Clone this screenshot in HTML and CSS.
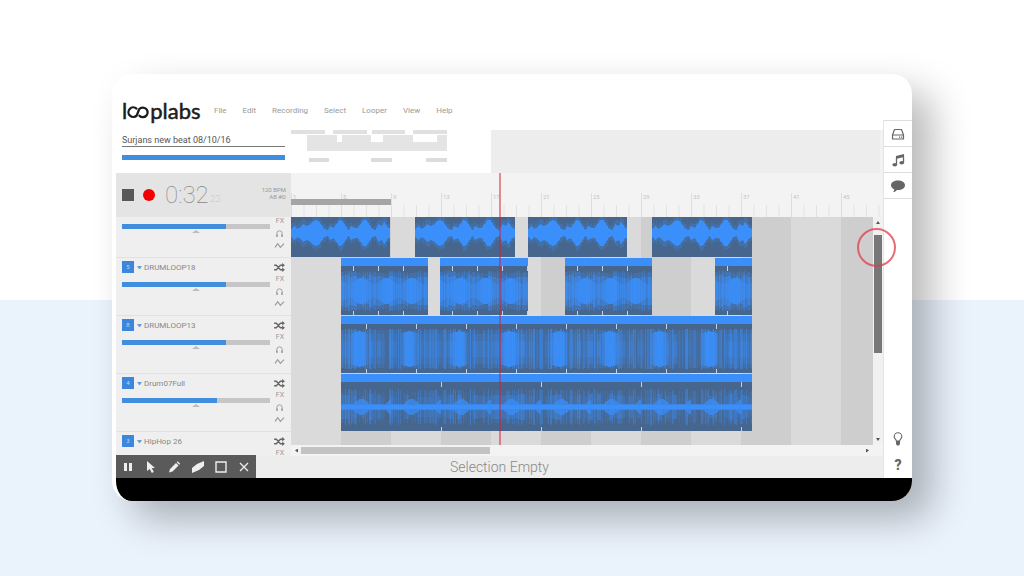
FILE: index.html
```
<!DOCTYPE html>
<html lang="en">
<head>
    <meta charset="UTF-8">
    <meta name="viewport" content="width=device-width, initial-scale=1.0">
    <title>Looplabs</title>
    <link rel="stylesheet" href="styles.css">
</head>
<body>
    <!-- shared icons -->
    <svg class="sprite" aria-hidden="true">
        <symbol id="shuffle" viewBox="0 0 12 10">
            <path d="M0 2.5h2.5L7 7.5h3M0 7.5h2.5L7 2.5h3" fill="none" stroke="currentColor" stroke-width="1.5"/>
            <path d="M9 0l3 2.5L9 5zM9 5l3 2.5L9 10z" fill="currentColor"/>
        </symbol>
        <symbol id="phones" viewBox="0 0 12 10">
            <path d="M3 8V5a3 3 0 0 1 6 0v3" fill="none" stroke="currentColor" stroke-width="1"/>
            <path d="M2.500 6h1.500v3H2.500zM8 6h1.500v3H8z" fill="currentColor"/>
        </symbol>
        <symbol id="curve" viewBox="0 0 12 10">
            <path d="M1 7l3-4 3 4 4-4" fill="none" stroke="currentColor" stroke-width="1.3"/>
        </symbol>
    </svg>

    <main class="card">
        <div class="app">
            <div class="editor">
                <header class="header">
                    <a class="logo" href="#" aria-label="looplabs">l<svg viewBox="0 0 22 14" width="22" height="14" aria-hidden="true"><path d="M9.500 3.600A4.800 4.800 0 1 0 9.800 10.400L12.200 4.200A4.800 4.800 0 1 1 12.500 10.800" fill="none" stroke="currentColor" stroke-width="2.300" stroke-linecap="round"/></svg>plabs</a>
                    <nav class="menu">
                        <button type="button">File</button>
                        <button type="button">Edit</button>
                        <button type="button">Recording</button>
                        <button type="button">Select</button>
                        <button type="button">Looper</button>
                        <button type="button">View</button>
                        <button type="button">Help</button>
                    </nav>
                </header>

                <div class="body">
                    <section class="side">
                        <div class="project">
                            <input class="project-name" type="text" aria-label="Project name" value="Surjans new beat 08/10/16">
                            <div class="project-bar"></div>
                        </div>
                        <div class="transport">
                            <button class="stop" type="button" aria-label="Stop"></button>
                            <button class="record" type="button" aria-label="Record"></button>
                            <span class="time">0:32</span><span class="millis">.23</span>
                            <span class="tempo">120 BPM<br>AB #D</span>
                        </div>
                        <div class="tracks" id="tracks"></div>
                    </section>

                    <section class="arrange">
                        <div class="overview">
                            <svg width="200" height="43" viewBox="0 0 200 43" aria-hidden="true">
                                <path d="M0 0h200v43H0z" fill="#fff"/>
                                <path d="M0 0h34v4H0zM42 0h34v4H42zM81 0h33v4H81zM122 0h34v4h-34z" fill="#e0e0e0"/>
                                <path d="M16 5h30v7H16zM51 5h29v7H51zM92 5h30v7H92zM146 5h10v7h-10z" fill="#e4e4e4"/>
                                <path d="M16 12h140v9H16z" fill="#e4e4e4"/>
                                <path d="M18 28h20v4H18zM80 28h21v4H80zM135 28h21v4h-21z" fill="#dcdcdc"/>
                            </svg>
                        </div>
                        <div class="timeline">
                            <div class="ruler" id="ruler"><div class="loop-range"></div></div>
                            <div class="stage">
                                <div class="lanes" id="lanes"></div>
                                <div class="vscroll">
                                    <span class="arrow up"></span>
                                    <div class="vthumb"></div>
                                    <span class="arrow down"></span>
                                    <div class="pointer-ring"></div>
                                </div>
                            </div>
                            <div class="hscroll">
                                <span class="arrow left"></span>
                                <div class="hthumb"></div>
                                <span class="arrow right"></span>
                            </div>
                            <div class="playhead"></div>
                        </div>
                    </section>
                </div>

                <footer class="status">
                    <div class="tools">
                        <button type="button" aria-label="Pause"><svg viewBox="0 0 14 14"><path d="M3 3h3v8H3zM8 3h3v8H8z" fill="currentColor"/></svg></button>
                        <button type="button" aria-label="Pointer"><svg viewBox="0 0 14 14"><path d="M3 1l8 7H7.800l2 4-2 1-2-4L3 11z" fill="currentColor"/></svg></button>
                        <button type="button" aria-label="Pencil"><svg viewBox="0 0 14 14"><path d="M2 12.500l1-3.500 6-6 2.500 2.500-6 6zM9.700 2.300l1-1 2.500 2.500-1 1z" fill="currentColor"/></svg></button>
                        <button type="button" aria-label="Eraser"><svg viewBox="0 0 14 14"><path d="M1 8l5-4 7-3v5l-5 4-7 3z" fill="currentColor"/></svg></button>
                        <button type="button" aria-label="Selection"><svg viewBox="0 0 14 14"><path d="M2 2h10v10H2z" fill="none" stroke="currentColor" stroke-width="1.400"/></svg></button>
                        <button type="button" aria-label="Delete"><svg viewBox="0 0 14 14"><path d="M3 3l8 8M11 3l-8 8" fill="none" stroke="currentColor" stroke-width="1.300"/></svg></button>
                    </div>
                    <span class="status-text">Selection Empty</span>
                </footer>
            </div>

            <aside class="rail">
                <button type="button" aria-label="Library"><svg viewBox="0 0 14 14"><path d="M1.500 8l2-5.500h7l2 5.500v4h-11zM1.500 8h11" fill="none" stroke="currentColor" stroke-width="1.200" stroke-linejoin="round"/><path d="M8 9.500h1.200v1.200H8zM10 9.500h1.200v1.200H10z" fill="currentColor"/></svg></button>
                <button type="button" aria-label="Sounds"><svg viewBox="0 0 14 14"><path d="M5 3l8-2v3L5 6z" fill="currentColor"/><path d="M5.500 4v7.500M12.500 2.500v7" stroke="currentColor" stroke-width="1.300"/><ellipse cx="3.800" cy="11.700" rx="2.400" ry="1.800" fill="currentColor"/><ellipse cx="10.800" cy="9.800" rx="2.400" ry="1.800" fill="currentColor"/></svg></button>
                <button type="button" aria-label="Chat"><svg viewBox="0 0 14 14"><path d="M7 1.500c4 0 7 2 7 4.800s-3 4.800-7 4.800l-1.200-.1C5 12.500 3.500 13 2 13c.8-.8 1.200-1.600 1.200-2.600C1.200 9.500 0 8 0 6.300c0-2.800 3-4.800 7-4.800z" fill="currentColor"/></svg></button>
                <div class="rail-end">
                    <button type="button" aria-label="Tips"><svg viewBox="0 0 14 14"><path d="M5.300 9C5.300 7.300 3.200 7 3.200 4.600a3.800 3.800 0 0 1 7.600 0C10.800 7 8.700 7.300 8.700 9z" fill="none" stroke="currentColor" stroke-width="1.100"/><path d="M5 9h4v3l-1 1.500H6L5 12z" fill="currentColor"/></svg></button>
                    <button class="help" type="button">?</button>
                </div>
            </aside>
        </div>
        <div class="letterbox"></div>
    </main>

    <script src="app.js"></script>
</body>
</html>
```

FILE: styles.css
```
* { box-sizing: border-box; }

body {
    margin: 0;
    min-height: 100vh;
    padding: 74px 112px 75px;
    display: flex;
    font-family: Roboto, Arial, sans-serif;
    color: #777;
    background: linear-gradient(#fff 300px, #eaf2fc 300px);
}

button { border: 0; padding: 0; background: none; color: inherit; font: inherit; cursor: pointer; }
.sprite { display: none; }

.card {
    flex: 1;
    min-width: 0;
    display: flex;
    flex-direction: column;
    border-left: 4px solid #fff;
    border-radius: 20px;
    overflow: hidden;
    background: #fff;
    box-shadow: 20px 18px 38px rgba(0, 0, 0, 0.28);
}
.app { flex: 1; display: grid; grid-template-columns: 1fr 29px; }
.letterbox { height: 23px; background: #000; }

.editor { display: flex; flex-direction: column; min-width: 0; }

/* header */
.header { height: 56px; padding: 17px 6px 0; display: flex; align-items: center; gap: 13px; }
.logo { display: flex; align-items: baseline; width: 79px; font: 22px/32px Lato, sans-serif; color: #1c1c1c; text-decoration: none; -webkit-text-stroke: 0.5px #1c1c1c; }
.logo svg { margin-right: 1px; }
.menu { display: flex; gap: 16px; font-size: 8px; color: #999; }

.body { flex: 1; display: grid; grid-template-columns: 175px 1fr; }
.side, .arrange { display: flex; flex-direction: column; min-width: 0; }

/* project name and transport */
.project { height: 43px; padding: 4px 6px; }
.project-name { display: block; width: 163px; height: 13px; padding: 0; border: 0; border-bottom: 1px solid #777; font: 9px Roboto, sans-serif; color: #555; background: none; }
.project-bar { width: 163px; height: 5px; margin-top: 8px; background: #418dde; }
.transport { height: 44px; padding: 0 5px 0 6px; display: flex; align-items: center; background: #e4e4e4; }
.stop { width: 12px; height: 12px; background: #585858; }
.record { width: 12px; height: 12px; margin: 0 10px 0 9px; border-radius: 50%; background: #f40000; }
.time { font-size: 24px; font-weight: 100; color: #888; }
.millis { padding-top: 7px; font-size: 9px; font-weight: 100; color: #aaa; }
.tempo { margin-left: auto; padding-bottom: 4px; font-size: 6px; line-height: 7px; text-align: right; color: #999; }

/* tracks */
.tracks { flex: 1 1 0; min-height: 0; overflow: hidden; background: #efefef; }
.track { height: 58px; padding: 3px 5px 0 6px; display: grid; grid-template-columns: 148px 12px; justify-content: space-between; border-bottom: 1px solid #e2e2e2; }
.track:first-child, .lane:first-child { margin-top: -17px; }
.track-head { display: flex; align-items: center; height: 12px; font-size: 8px; color: #888; }
.badge { width: 12px; height: 12px; margin-right: 3px; font-size: 6px; line-height: 12px; text-align: center; color: #b9d8fb; background: #3c87dc; }
.caret { width: 5px; margin-right: 2px; border: 2px solid transparent; border-top: 3px solid #6b9fdb; border-bottom: 0; }
.volume { display: block; appearance: none; width: 148px; height: 5px; margin: 9px 0 1px; background: linear-gradient(90deg, #418dde var(--level), #c6c6c6 var(--level)); }
.volume::-webkit-slider-thumb { appearance: none; width: 1px; height: 5px; }
.pan { width: 8px; margin: 0 auto; border: 4px solid transparent; border-bottom: 3px solid #bcbcbc; border-top: 0; }
.track-tools { display: flex; flex-direction: column; align-items: center; gap: 2px; color: #999; }
.track-tools button { display: block; width: 12px; height: 10px; font-size: 7px; line-height: 10px; }
.track-tools svg { display: block; width: 11px; height: 9px; }
.track-tools button:first-child { height: 11px; padding-top: 1px; color: #666; }

/* timeline */
.overview { height: 43px; background: #ededed; border-right: 3px solid #f2f2f2; }
.overview svg { display: block; }
.timeline { position: relative; flex: 1; display: flex; flex-direction: column; }
.ruler {
    position: relative;
    height: 44px;
    overflow: hidden;
    background: repeating-linear-gradient(90deg, #dedede 0 1px, transparent 1px 50px) 0 20px / 100% 24px no-repeat,
        linear-gradient(90deg, #e2e2e2 1px, transparent 1px) 0 32px / 12.5px 12px repeat-x #f3f3f3;
}
.ruler span { position: absolute; top: 19px; font-size: 6px; line-height: 10px; color: #c4c4c4; }
.loop-range { position: relative; z-index: 1; width: 100px; height: 6px; margin-top: 26px; background: #a5a5a5; }
.stage { flex: 1; display: flex; }
.lanes { position: relative; flex: 1; height: 228px; overflow: hidden; background: repeating-linear-gradient(90deg, #dadada 0 50px, #cecece 50px 100px); }
.lane { position: relative; height: 58px; }
/* clips sit at their start time */
.clip { position: absolute; top: 0; height: 57px; overflow: hidden; border-top: 8px solid #3a8ffb; background: #47668d; }
.clip svg { display: block; }
.playhead { position: absolute; top: 0; bottom: 11px; left: 208px; width: 2px; background: rgba(214, 30, 50, 0.5); }

/* scrollbars */
.vscroll { position: relative; width: 10px; display: flex; flex-direction: column; align-items: center; padding: 4px 0; background: #f1f1f1; }
.vthumb { width: 8px; height: 118px; margin: 11px 0 auto; background: #777; }
.hscroll { height: 11px; padding: 1px 14px 1px 4px; display: flex; align-items: center; background: #f3f3f3; }
.hthumb { width: 33%; height: 7px; margin: 0 auto 0 3px; background: #c3c3c3; }
.arrow { width: 4px; height: 3px; background: #555; }
.up { clip-path: polygon(50% 0, 100% 100%, 0 100%); }
.down { clip-path: polygon(0 0, 100% 0, 50% 100%); }
.left, .right { width: 3px; height: 4px; }
.left { clip-path: polygon(100% 0, 100% 100%, 0 50%); }
.right { clip-path: polygon(0 0, 100% 50%, 0 100%); }
.pointer-ring { position: absolute; top: 11px; left: -16px; width: 39px; height: 39px; border: 2px solid rgba(222, 60, 75, 0.75); border-radius: 50%; }

/* status bar */
.status { height: 22px; display: flex; background: #ededed; }
.tools { display: flex; width: 140px; height: 23px; margin-top: -1px; background: #5a5a5a; color: #eee; z-index: 1; }
.tools button { flex: 1; }
.tools svg { display: block; width: 14px; height: 14px; margin: auto; }
.status-text { flex: 1; padding-right: 140px; text-align: center; font-size: 14px; line-height: 22px; font-weight: 300; color: #888; }

/* right rail */
.rail { margin-top: 46px; display: flex; flex-direction: column; border-left: 1px solid #e4e4e4; color: #666; background: #fff; }
.rail > button { height: 26px; border-top: 1px solid #ddd; }
.rail > button:nth-child(3) { height: 27px; border-bottom: 1px solid #ddd; }
.rail svg { display: block; width: 14px; height: 14px; margin: auto; }
.rail-end { margin-top: auto; display: flex; flex-direction: column; }
.rail-end button { height: 26px; }
.rail-end .help { font-size: 14px; font-weight: 900; }
```

FILE: app.js
```
const BLUE = '#3a8ffb';

// the first track is scrolled halfway out, so its head is left empty
const tracks = [
    { name: '', level: 70, kind: 'pulse', clips: [[0, 99], [124, 100], [237, 99], [361, 100]] },
    { name: 'DRUMLOOP18', no: 5, level: 70, kind: 'dense', tick: 25, first: 12, clips: [[50, 87], [149, 88], [274, 87], [424, 37]] },
    { name: 'DRUMLOOP13', no: 8, level: 70, kind: 'burst', tick: 50, first: 25, clips: [[50, 411]] },
    { name: 'Drum07Full', no: 4, level: 64, kind: 'line', tick: 100, first: 100, clips: [[50, 411]] },
    { name: 'HipHop 26', no: 3, level: 70, clips: [] }
];

// half heights of one bar of the pulse loop, a value every 3px
const PULSE = [4, 7, 4, 6, 9, 7, 8, 11, 13, 12, 8, 4, 3, 7, 5, 9, 13, 12, 7, 3, 7, 5, 5, 9, 13, 13, 8, 4, 3, 9, 7, 11, 6, 4];

function noise(n) {
    const v = Math.sin(n * 127.1 + 11.7) * 43758.5453;
    return v - Math.floor(v);
}

function bar(x, half, opacity) {
    return `<rect x="${x}" y="${25 - half}" width="1" height="${half * 2}" fill="${BLUE}" opacity="${opacity.toFixed(2)}"/>`;
}

function wave(track, width) {
    let out = '';
    for (let x = 0; x < width; x++) {
        const r = noise(x);
        const wide = noise(Math.floor(x / 4) + 50);
        if (track.kind === 'pulse') {
            const i = x / 3;
            const a = PULSE[Math.floor(i)] || 3;
            const b = PULSE[Math.floor(i) + 1] || 3;
            const h = Math.round(a + (b - a) * (i % 1));
            out += bar(x, h + 2 + Math.round(r * 4), 0.25) + bar(x, h, 1);
        } else if (track.kind === 'dense') {
            const swell = 0.5 + 0.5 * Math.cos((x % 25 - 20) / 4);
            out += bar(x, 17 + Math.round(r * 3), 0.1 + r * 0.35);
            out += bar(x, 13 + Math.round(wide * 3), 0.2 + r * 0.5);
            out += bar(x, 7 + Math.round(swell * 6), 0.4 + swell * 0.5);
        } else if (track.kind === 'burst') {
            const swell = Math.max(0, 1 - Math.abs(x % 50 - 18) / 10);
            out += bar(x, 18 + Math.round(r * 2), 0.1 + r * r * 0.6);
            out += bar(x, 15 + Math.round(swell * 3), Math.min(0.9, swell * 1.3 + wide * 0.3));
            out += bar(x, 8, 0.35 * wide);
        } else {
            const swell = Math.max(0, Math.cos((x % 50 - 20) / 5));
            out += bar(x, 12 + Math.round(r * 6), r * r * 0.5);
            out += bar(x, 8 + Math.round(wide * 5), wide * 0.4);
            out += bar(x, 3 + Math.round(swell * 5), 0.7) + bar(x, 2, 1);
        }
    }
    for (let x = track.first; x < width; x += track.tick) {
        out += `<path d="M${x} 0h1v5h-1zM${x} 45h1v4h-1z" fill="#c3d3e4"/>`;
    }
    return `<svg width="${width}" height="49" aria-hidden="true">${out}</svg>`;
}

function head(t) {
    return t.name ? `<span class="badge">${t.no}</span><span class="caret"></span>${t.name}` : '';
}

document.getElementById('tracks').innerHTML = tracks.map((t, i) => `
    <div class="track">
        <div>
            <div class="track-head">${head(t)}</div>
            <input class="volume" type="range" aria-label="Track ${i + 1} volume" value="${t.level}" style="--level: ${t.level}%">
            <div class="pan"></div>
        </div>
        <div class="track-tools">
            <button type="button" aria-label="Shuffle"><svg><use href="#shuffle"/></svg></button>
            <button type="button">FX</button>
            <button type="button" aria-label="Solo"><svg><use href="#phones"/></svg></button>
            <button type="button" aria-label="Automation"><svg><use href="#curve"/></svg></button>
        </div>
    </div>`).join('');

document.getElementById('lanes').innerHTML = tracks.map(t => `
    <div class="lane">${t.clips.map(([start, width]) =>
        `<div class="clip" style="left: ${start}px; width: ${width}px">${wave(t, width)}</div>`).join('')}</div>`).join('');

// bar numbers, one label every four bars
for (let i = 0; i < 12; i++) {
    const label = document.createElement('span');
    label.textContent = i * 4 + 1;
    label.style.left = i * 50 + 2 + 'px';
    document.getElementById('ruler').append(label);
}
```
